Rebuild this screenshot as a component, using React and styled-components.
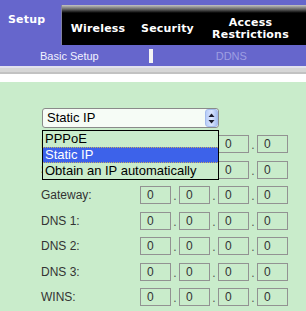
import React from "react";
import styled, { createGlobalStyle } from "styled-components";

const GlobalStyle = createGlobalStyle`
  html, body {
    margin: 0;
    padding: 0;
    background: #c9eccb;
  }
`;

const Page = styled.div`
  width: 306px;
  height: 311px;
  overflow: hidden;
  background: #c9eccb;
`;

const Header = styled.div`
  display: flex;
  height: 45px;
  background: #6666cc;
`;

const ActiveTab = styled.div`
  width: 61px;
  flex: none;
  box-sizing: border-box;
  padding: 13px 0 0 8px;
  height: 45px;
  line-height: 32px;
  color: #fff;
  font: bold 11px "DejaVu Sans", Verdana, sans-serif;
  letter-spacing: 0.2px;
`;

const TabBar = styled.div`
  flex: 1;
  display: flex;
  margin-top: 5px;
  padding-top: 8px;
  background: linear-gradient(#c4c4c4 0, #6a6a6a 4px, #000 8px);
  border-left: 1px solid #8080a0;
  overflow: hidden;
  white-space: nowrap;
`;

const Tab = styled.div`
  flex: none;
  width: ${(p) => p.w}px;
  height: 32px;
  display: flex;
  align-items: center;
  justify-content: center;
  text-align: center;
  color: #fff;
  font: bold 11px "DejaVu Sans", Verdana, sans-serif;
  letter-spacing: 0.2px;
  line-height: 12px;
`;

const SubNav = styled.div`
  display: flex;
  align-items: center;
  height: 21px;
  padding-left: 40px;
  background: #6666cc;
`;

const SubLink = styled.span`
  font: 11px "Liberation Sans", Arial, sans-serif;
  color: ${(p) => (p.dim ? "#9e9ee2" : "#f2f2ff")};
  margin-left: ${(p) => p.ml || 0}px;
`;

const SubDivider = styled.span`
  width: 4px;
  height: 14px;
  margin-left: 50px;
  background: #f4f4f4;
`;

const Separator = styled.div`
  height: 16px;
  background: linear-gradient(
    #e2e2ee 0 2px,
    #d6d6d6 2px 6px,
    #c2c2c2 6px 8px,
    #ffffff 8px 16px
  );
`;

const Content = styled.div`
  position: relative;
  padding: 26px 0 0 41px;
  font-family: "Liberation Sans", Arial, sans-serif;
`;

const SelectBox = styled.div`
  position: relative;
  width: 177px;
  height: 20px;
  margin-left: 1px;
  box-sizing: border-box;
  border: 1px solid #8a8a8a;
  border-radius: 3px;
  background: #f6fcf6;
  font-size: 13px;
  line-height: 18px;
  padding-left: 4px;
  color: #000;
  margin-bottom: 7px;
`;

const SpinButton = styled.div`
  position: absolute;
  right: 0;
  top: 0;
  width: 13px;
  height: 18px;
  box-sizing: border-box;
  border: 1px solid #a4bcec;
  border-radius: 3px;
  background: linear-gradient(90deg, #b8cdf8, #dbe6fd 50%, #a9c0f2);
  display: flex;
  align-items: center;
  justify-content: center;
`;

const Row = styled.div`
  display: flex;
  align-items: flex-start;
  height: 25.5px;
`;

const Label = styled.div`
  width: 99px;
  height: 18px;
  line-height: 18px;
  font-size: 12px;
  color: #333;
`;

const Octet = styled.div`
  width: 31px;
  height: 18px;
  box-sizing: border-box;
  border: 1px solid #929292;
  padding-left: 6px;
  font-size: 12px;
  line-height: 16px;
  color: #333;
`;

const Dot = styled.div`
  width: 8px;
  height: 18px;
  line-height: 20px;
  font-size: 12px;
  text-align: center;
  color: #555;
`;

const DropList = styled.div`
  position: absolute;
  left: 42px;
  top: 48px;
  width: 177px;
  box-sizing: border-box;
  border: 1px solid #000;
  background: #c9eccb;
  font-size: 13px;
`;

const Option = styled.div`
  height: 16px;
  line-height: 16px;
  padding-left: 2px;
  box-sizing: border-box;
  color: ${(p) => (p.selected ? "#fff" : "#000")};
  background: ${(p) => (p.selected ? "#3d62ea" : "transparent")};
  border-top: 1px dotted ${(p) => (p.selected ? "#c8b060" : "transparent")};
  border-bottom: 1px dotted ${(p) => (p.selected ? "#c8b060" : "transparent")};
  line-height: 14px;
`;

const rows = ["IP Address:", "Subnet Mask:", "Gateway:", "DNS 1:", "DNS 2:", "DNS 3:", "WINS:"];

function AddressRow({ label }) {
  return (
    <Row>
      <Label>{label}</Label>
      <Octet>0</Octet>
      <Dot>.</Dot>
      <Octet>0</Octet>
      <Dot>.</Dot>
      <Octet>0</Octet>
      <Dot>.</Dot>
      <Octet>0</Octet>
    </Row>
  );
}

export default function App() {
  return (
    <Page>
      <GlobalStyle />
      <Header>
        <ActiveTab>Setup</ActiveTab>
        <TabBar>
          <Tab w={72}>Wireless</Tab>
          <Tab w={67}>Security</Tab>
          <Tab w={99}>
            Access
            <br />
            Restrictions
          </Tab>
          <Tab w={120}>
            Applications &amp;
            <br />
            Gaming
          </Tab>
        </TabBar>
      </Header>
      <SubNav>
        <SubLink>Basic Setup</SubLink>
        <SubDivider />
        <SubLink dim ml={63}>DDNS</SubLink>
      </SubNav>
      <Separator />
      <Content>
        <SelectBox>
          Static IP
          <SpinButton>
            <svg width="7" height="11" viewBox="0 0 7 11">
              <path d="M3.5 0.5 L6.5 4 L0.5 4 Z" fill="#1a1a2a" />
              <path d="M3.5 10.5 L6.5 7 L0.5 7 Z" fill="#1a1a2a" />
            </svg>
          </SpinButton>
        </SelectBox>
        {rows.map((r) => (
          <AddressRow key={r} label={r} />
        ))}
        <DropList>
          <Option>PPPoE</Option>
          <Option selected>Static IP</Option>
          <Option>Obtain an IP automatically</Option>
        </DropList>
      </Content>
    </Page>
  );
}
